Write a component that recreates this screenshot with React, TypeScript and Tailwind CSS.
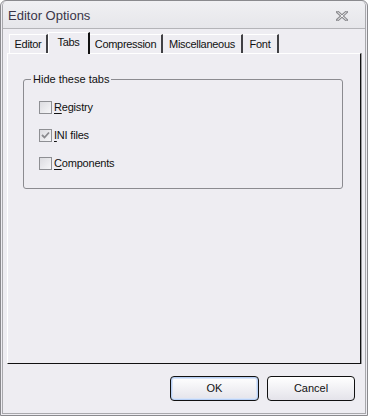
const TABS = [
  { id: "editor", label: "Editor", width: "w-[39px]" },
  { id: "tabs", label: "Tabs", width: "w-[42px]" },
  { id: "compression", label: "Compression", width: "w-[73px]" },
  { id: "misc", label: "Miscellaneous", width: "w-[80px]" },
  { id: "font", label: "Font", width: "w-[36px]" },
];

const OPTIONS = [
  { id: "registry", key: "R", rest: "egistry", checked: false },
  { id: "ini", key: "I", rest: "NI files", checked: true },
  { id: "components", key: "C", rest: "omponents", checked: false },
];

function CheckBox({ checked }: { checked: boolean }) {
  return (
    <div className="w-[13px] h-[13px] border border-[#8e8f93] bg-gradient-to-br from-[#dcdce0] to-[#f6f6f8] flex items-center justify-center">
      {checked && (
        <svg width="9" height="9" viewBox="0 0 9 9">
          <path d="M1 4 L3.5 6.5 L8 1.5" fill="none" stroke="#8a8a8e" strokeWidth="1.8" />
        </svg>
      )}
    </div>
  );
}

export default function App() {
  return (
    <div
      className="w-[368px] h-[416px] bg-[#eeedf2] border border-[#8a8a8e] rounded-t-[6px] text-[11px] text-[#111]"
      style={{ fontFamily: '"Liberation Sans", Arial, sans-serif' }}
    >
      <div className="h-[calc(100%-1px)] m-px mt-0 border-x border-b border-[#a8a8ac] rounded-t-[5px] flex flex-col">
        {/* Title bar */}
        <div className="h-[28px] shrink-0 flex items-center justify-between pl-[5px] pr-[17px] pt-[3px] border-b border-[#b4b4b8] bg-gradient-to-b from-[#f0f0f3] to-[#e6e6ea] rounded-t-[5px]">
          <span className="text-[13px] text-[#3a3548]">Editor Options</span>
          <svg width="12" height="10" viewBox="0 0 12 10">
            <path d="M1.5 1 L10.5 9 M10.5 1 L1.5 9" stroke="#8c8c90" strokeWidth="3" strokeLinecap="square" />
            <path d="M1.5 1 L10.5 9 M10.5 1 L1.5 9" stroke="#f2f2f4" strokeWidth="1" />
          </svg>
        </div>

        {/* Tab strip */}
        <div className="px-[4px] pt-[2px]">
          <div className="h-[22px] flex items-end pl-[2px] tracking-[-0.3px]">
            {TABS.map((tab) => {
              const active = tab.id === "tabs";
              return (
                <div
                  key={tab.id}
                  className={`${tab.width} flex items-center justify-center border-t border-white ${
                    active
                      ? "h-[22px] -mb-px relative z-10 bg-[#eeedf2] border-l border-r-2 border-r-[#111] pb-[2px]"
                      : "h-[19px] border-r-2 border-r-[#404044]"
                  } ${tab.id === "editor" ? "border-l" : ""}`}
                >
                  {tab.label}
                </div>
              );
            })}
          </div>

          {/* Tab page */}
          <div className="h-[311px] border-t border-l border-white border-r border-r-[#111] border-b border-b-[#111] shadow-[1px_0_0_#9a9a9e] pt-[25px] pl-[15px] pr-[17px]">
            <div className="relative h-[110px] border border-[#8b8b90] rounded-[3px] pt-[21px] pl-[15px] flex flex-col gap-[15px]">
              <span className="absolute -top-[7px] left-[7px] px-[2px] bg-[#eeedf2] leading-[13px]">
                Hide these tabs
              </span>
              {OPTIONS.map((opt) => (
                <div key={opt.id} className="flex items-center gap-[2px] h-[13px] tracking-[-0.2px]">
                  <CheckBox checked={opt.checked} />
                  <span className="leading-[13px]">
                    <span className="underline underline-offset-2">{opt.key}</span>
                    {opt.rest}
                  </span>
                </div>
              ))}
            </div>
          </div>
        </div>

        {/* Buttons */}
        <div className="flex justify-end gap-[8px] pr-[10px] pt-[12px]">
          <button className="w-[89px] h-[25px] rounded-[4px] border border-[#111] bg-gradient-to-b from-white to-[#e4e3ea] shadow-[inset_0_0_0_1px_#b7cff5,inset_0_0_0_2px_#d8e4f8] text-[11px] text-[#111]">
            OK
          </button>
          <button className="w-[88px] h-[25px] rounded-[4px] border border-[#111] bg-gradient-to-b from-white to-[#e4e3ea] text-[11px] text-[#111]">
            Cancel
          </button>
        </div>
      </div>
    </div>
  );
}
